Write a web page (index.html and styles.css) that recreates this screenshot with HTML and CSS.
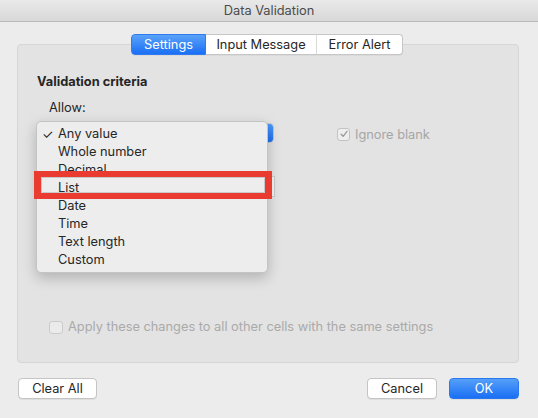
FILE: index.html
```html
<!DOCTYPE html>
<html>
<head>
<meta charset="utf-8">
<title>Data Validation</title>
<link rel="stylesheet" href="styles.css">
</head>
<body>
<div class="window">
  <div class="titlebar">Data Validation</div>
  <div class="body">
    <div class="tabs">
      <div class="tab tab-active tab-settings">Settings</div>
      <div class="tab tab-input">Input Message</div>
      <div class="tab tab-error">Error Alert</div>
    </div>
    <div class="panel">
      <div class="heading">Validation criteria</div>
      <div class="label-allow">Allow:</div>
      <div class="row-allow">
        <div class="popup">
          <span class="popup-text">Any value</span>
          <span class="popup-arrows"></span>
        </div>
        <label class="check check-ignore">
          <span class="box box-checked">
            <svg viewBox="0 0 12 12" width="10" height="10"><path d="M2.5 6.2 L5 8.8 L9.6 2.8" fill="none" stroke="#9a9a9a" stroke-width="1.6" stroke-linecap="round" stroke-linejoin="round"/></svg>
          </span>
          <span class="check-text">Ignore blank</span>
        </label>
      </div>
      <div class="textfield"></div>
      <label class="check check-apply">
        <span class="box box-apply"></span>
        <span class="check-text">Apply these changes to all other cells with the same settings</span>
      </label>

      <div class="menu">
        <div class="menu-item menu-item-checked"><span class="tick">✓</span>Any value</div>
        <div class="menu-item">Whole number</div>
        <div class="menu-item">Decimal</div>
        <div class="menu-item">List</div>
        <div class="menu-item">Date</div>
        <div class="menu-item">Time</div>
        <div class="menu-item">Text length</div>
        <div class="menu-item">Custom</div>
      </div>
      <div class="highlight"></div>
    </div>
    <div class="footer">
      <button class="btn btn-clear">Clear All</button>
      <div class="footer-right">
        <button class="btn btn-cancel">Cancel</button>
        <button class="btn btn-ok">OK</button>
      </div>
    </div>
  </div>
</div>
</body>
</html>
```

FILE: styles.css
```css
* { box-sizing: border-box; }
html, body {
  margin: 0;
  padding: 0;
}
body {
  width: 538px;
  height: 418px;
  overflow: hidden;
  background: #ececec;
  font-family: Inter, "Liberation Sans", Arial, sans-serif;
  font-size: 12.8px;
  color: #262626;
}
.window {
  width: 538px;
  height: 418px;
  background: #ececec;
}
.titlebar {
  height: 22px;
  line-height: 21px;
  text-align: center;
  color: #4b4b4b;
  background: linear-gradient(#e9e9e9, #d8d8d8);
  border-bottom: 1px solid #b9b9b9;
}
.body {
  padding: 12px 19px 0 17px;
}
.tabs {
  display: flex;
  justify-content: center;
  position: relative;
  z-index: 2;
  height: 21px;
  margin-bottom: -11px;
  padding-right: 2px;
}
.tab {
  height: 21px;
  line-height: 19px;
  text-align: center;
  background: #ffffff;
  border: 1px solid #c6c6c6;
  border-left: none;
  color: #262626;
  box-shadow: 0 0.5px 0 rgba(0,0,0,0.08);
}
.tab-settings { width: 75px; border-left: 1px solid #3c84f0; border-radius: 4px 0 0 4px; }
.tab-input { width: 111px; border-right-color: #dadada; }
.tab-error { width: 86px; border-radius: 0 4px 4px 0; }
.tab-active {
  background: linear-gradient(#5aa2f9, #1a6ff4);
  border-color: #2f7bef;
  color: #ffffff;
}
.panel {
  position: relative;
  height: 319px;
  background: #e3e3e3;
  border: 1px solid #d6d6d6;
  border-radius: 4px;
  padding: 29px 19px 27px 19px;
  display: flex;
  flex-direction: column;
  align-items: flex-start;
}
.heading {
  font-weight: bold;
  line-height: 16px;
  color: #262626;
}
.label-allow {
  margin-top: 10px;
  margin-left: 12px;
  line-height: 16px;
}
.row-allow {
  display: flex;
  align-items: center;
  margin-top: 7px;
  margin-left: 12px;
  height: 20px;
}
.popup {
  width: 225px;
  height: 20px;
  background: #ffffff;
  border: 1px solid #c6c6c6;
  border-radius: 4px;
  display: flex;
  align-items: center;
  justify-content: space-between;
  padding-left: 8px;
  overflow: hidden;
}
.popup-arrows {
  width: 17px;
  height: 20px;
  background: linear-gradient(#4f9af8, #1a6ff4);
  border-radius: 0 4px 4px 0;
}
.check {
  display: flex;
  align-items: center;
  color: #a6a6a6;
}
.check-ignore {
  margin-left: 63px;
  padding-top: 2px;
}
.box {
  width: 13px;
  height: 13px;
  border: 1px solid #c3c3c3;
  border-radius: 3px;
  background: #eeeeee;
  display: flex;
  align-items: center;
  justify-content: center;
  margin-right: 5px;
}
.textfield {
  margin-top: 33px;
  margin-left: 12px;
  width: 226px;
  height: 21px;
  background: #f3f3f3;
  border: 1px solid #cbcbcb;
}
.check-apply {
  margin-top: auto;
  margin-left: 12px;
  line-height: 16px;
  color: #aaaaaa;
}
.box-apply {
  width: 14px;
  height: 13px;
  background: #ebebeb;
  border-color: #cacaca;
}
.menu {
  position: absolute;
  left: 18px;
  top: 76px;
  width: 232px;
  height: 152px;
  background: #ededed;
  border: 1px solid #c4c4c4;
  border-radius: 5px;
  box-shadow: 0 5px 14px rgba(0,0,0,0.22);
  padding: 3px 0 3px 0;
  z-index: 3;
}
.menu-item {
  position: relative;
  height: 18px;
  line-height: 18px;
  padding-left: 21px;
  color: #262626;
}
.tick {
  position: absolute;
  left: 5px;
  top: 0;
  font-size: 13px;
}
.highlight {
  position: absolute;
  left: 16px;
  top: 126px;
  width: 238px;
  height: 28px;
  border-style: solid;
  border-color: #ea3b31;
  border-width: 6px 7px;
  box-shadow: inset 0 0 0 1px #c9c9c9;
  z-index: 4;
}
.footer {
  display: flex;
  justify-content: space-between;
  align-items: center;
  margin-top: 15px;
  padding-left: 1px;
}
.footer-right {
  display: flex;
  gap: 12px;
}
.btn {
  font-family: Inter, "Liberation Sans", Arial, sans-serif;
  font-size: 12.8px;
  height: 21px;
  padding: 0;
  line-height: 19px;
  background: #ffffff;
  color: #262626;
  border: 1px solid #c4c4c4;
  border-radius: 4px;
  box-shadow: 0 1px 0 rgba(0,0,0,0.06);
}
.btn-clear { width: 79px; }
.btn-cancel { width: 70px; }
.btn-ok {
  width: 70px;
  color: #ffffff;
  border-color: #2a78ef;
  background: linear-gradient(#55a0f9, #1a6ff4);
}
```
